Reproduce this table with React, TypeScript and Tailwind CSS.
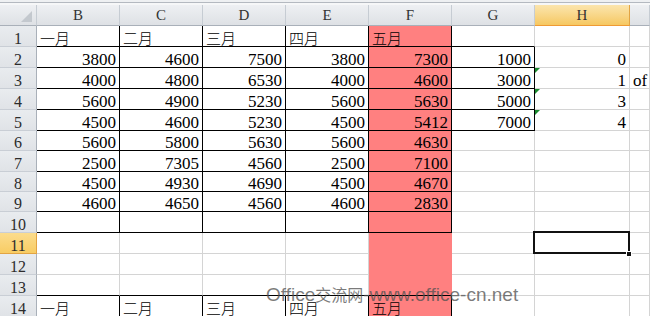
import React from "react";

const COLS = ["B", "C", "D", "E", "F", "G", "H", "I"];

type Cell = { t?: string; cjk?: boolean };

const months = ["一月", "二月", "三月", "四月", "五月"];

const nums: string[][] = [
  ["3800", "4600", "7500", "3800", "7300"],
  ["4000", "4800", "6530", "4000", "4600"],
  ["5600", "4900", "5230", "5600", "5630"],
  ["4500", "4600", "5230", "4500", "5412"],
  ["5600", "5800", "5630", "5600", "4630"],
  ["2500", "7305", "4560", "2500", "7100"],
  ["4500", "4930", "4690", "4500", "4670"],
  ["4600", "4650", "4560", "4600", "2830"],
];

const gCol: Record<number, string> = { 2: "1000", 3: "3000", 4: "5000", 5: "7000" };
const hCol: Record<number, string> = { 2: "0", 3: "1", 4: "3", 5: "4" };

function getCell(r: number, c: number): Cell {
  if ((r === 1 || r === 14) && c <= 4) return { t: months[c], cjk: true };
  if (r >= 2 && r <= 9 && c <= 4) return { t: nums[r - 2][c] };
  if (c === 5 && gCol[r]) return { t: gCol[r] };
  if (c === 6 && hCol[r]) return { t: hCol[r] };
  if (c === 7 && r === 3) return { t: "of" };
  return {};
}

const rowHeights: Record<number, string> = {
  1: "h-[21px]",
  2: "h-[21px]",
  3: "h-[21px]",
  4: "h-[21px]",
  5: "h-[21px]",
  6: "h-[20px]",
  7: "h-[21px]",
  8: "h-[20px]",
  9: "h-[20px]",
  10: "h-[21px]",
  11: "h-[21px]",
  12: "h-[21px]",
  13: "h-[21px]",
  14: "h-[21px]",
};

function rightColor(r: number, c: number): string {
  const inTable = c <= 4 && (r <= 10 || r === 14);
  if (inTable) return "border-r-black";
  if (c === 5 && r >= 2 && r <= 5) return "border-r-black";
  if (c === 4) return "border-r-[#ff8080]";
  return "border-r-[#d4d4d4]";
}

function bottomColor(r: number, c: number): string {
  if (c <= 4 && r <= 10) return "border-b-black";
  if (c <= 4 && r === 13) return "border-b-black";
  if (c === 5 && r <= 5) return "border-b-black";
  if (c === 4) return "border-b-[#ff8080]";
  return "border-b-[#d4d4d4]";
}

function DataCell({ r, c }: { r: number; c: number }) {
  const cell = getCell(r, c);
  const pink = c === 4;
  const left = cell.cjk || c === 7;
  const green = c === 6 && r >= 3 && r <= 5;
  return (
    <div
      className={`relative flex items-end border-r border-b ${rightColor(r, c)} ${bottomColor(r, c)} ${
        pink ? "bg-[#ff8080]" : "bg-white"
      } ${left ? "justify-start pl-[3px]" : "justify-end pr-[3px]"} ${rowHeights[r]}`}
    >
      {green && (
        <svg className="absolute left-0 top-0" width="5" height="5" viewBox="0 0 5 5">
          <polygon points="0,0 5,0 0,5" fill="#1a8a2e" />
        </svg>
      )}
      {cell.t &&
        (cell.cjk ? (
          <span className="font-['Noto_Sans_CJK_SC',sans-serif] font-light text-[15px] leading-[15px] text-black whitespace-nowrap mb-[1px]">
            {cell.t}
          </span>
        ) : (
          <span className="font-['Liberation_Serif',serif] text-[17px] leading-[15px] text-black whitespace-nowrap">
            {cell.t}
          </span>
        ))}
    </div>
  );
}

function RowHeader({ r }: { r: number }) {
  const sel = r === 11;
  return (
    <div
      className={`flex items-end justify-center border-r border-b ${rowHeights[r]} ${
        sel
          ? "bg-gradient-to-b from-[#fbdc8c] to-[#f8cc63] border-r-[#e2a443] border-b-[#e2a443]"
          : "bg-gradient-to-b from-[#e9ecef] to-[#e0e3e7] border-r-[#a9b0b9] border-b-[#c9ced5]"
      }`}
    >
      <span className="font-['Liberation_Serif',serif] text-[16px] leading-[15px] text-[#2c2c2c]">{r}</span>
    </div>
  );
}

function ColHeader({ label, sel }: { label: string; sel?: boolean }) {
  return (
    <div
      className={`flex h-[21px] items-center justify-center border-r border-b ${
        sel
          ? "bg-gradient-to-b from-[#fbe5ad] to-[#f6c860] border-r-[#e2a443] border-b-[#ef9a34]"
          : "bg-gradient-to-b from-[#eef0f3] to-[#dee1e5] border-r-[#c6ccd3] border-b-[#a9b0b9]"
      }`}
    >
      <span className="font-['Liberation_Serif',serif] text-[15px] leading-none text-[#333] mt-[1px]">{label}</span>
    </div>
  );
}

export default function App() {
  const rows = Array.from({ length: 14 }, (_, i) => i + 1);
  return (
    <div className="relative w-[650px] h-[316px] overflow-hidden bg-white">
      <div className="h-[2px] bg-[#eef0f2]" />
      <div className="h-[1px] bg-[#b4b9c0]" />
      <div className="h-[2px] bg-[#f6f7f8]" />
      <div className="grid grid-cols-[37px_83px_83px_83px_83px_83px_83px_95px_1fr]">
        <div className="relative h-[21px] border-r border-b border-r-[#c6ccd3] border-b-[#a9b0b9] bg-gradient-to-b from-[#eef0f3] to-[#dee1e5]">
          <svg className="absolute right-[4px] bottom-[3px]" width="11" height="11" viewBox="0 0 11 11">
            <polygon points="11,0 11,11 0,11" fill="#c3c8ce" />
          </svg>
        </div>
        {COLS.map((c) => (
          <ColHeader key={c} label={c === "I" ? "" : c} sel={c === "H"} />
        ))}
        {rows.map((r) => (
          <React.Fragment key={r}>
            <RowHeader r={r} />
            {COLS.map((_, ci) => (
              <DataCell key={ci} r={r} c={ci} />
            ))}
          </React.Fragment>
        ))}
      </div>

      {/* active cell selection H11 */}
      <div className="absolute left-[533px] top-[231px] w-[97px] h-[23px] border-[2px] border-[#111]" />
      <div className="absolute left-[626px] top-[251px] w-[6px] h-[6px] bg-[#111] border border-white" />

      {/* watermark */}
      <div className="absolute left-[266px] top-[282px] whitespace-nowrap font-['Liberation_Sans',sans-serif] text-[19px] leading-[24px] text-[#505050]/75">
        Office<span className="font-['Noto_Sans_CJK_SC',sans-serif] text-[16px]">交流网</span>-www.office-cn.net
      </div>
    </div>
  );
}
